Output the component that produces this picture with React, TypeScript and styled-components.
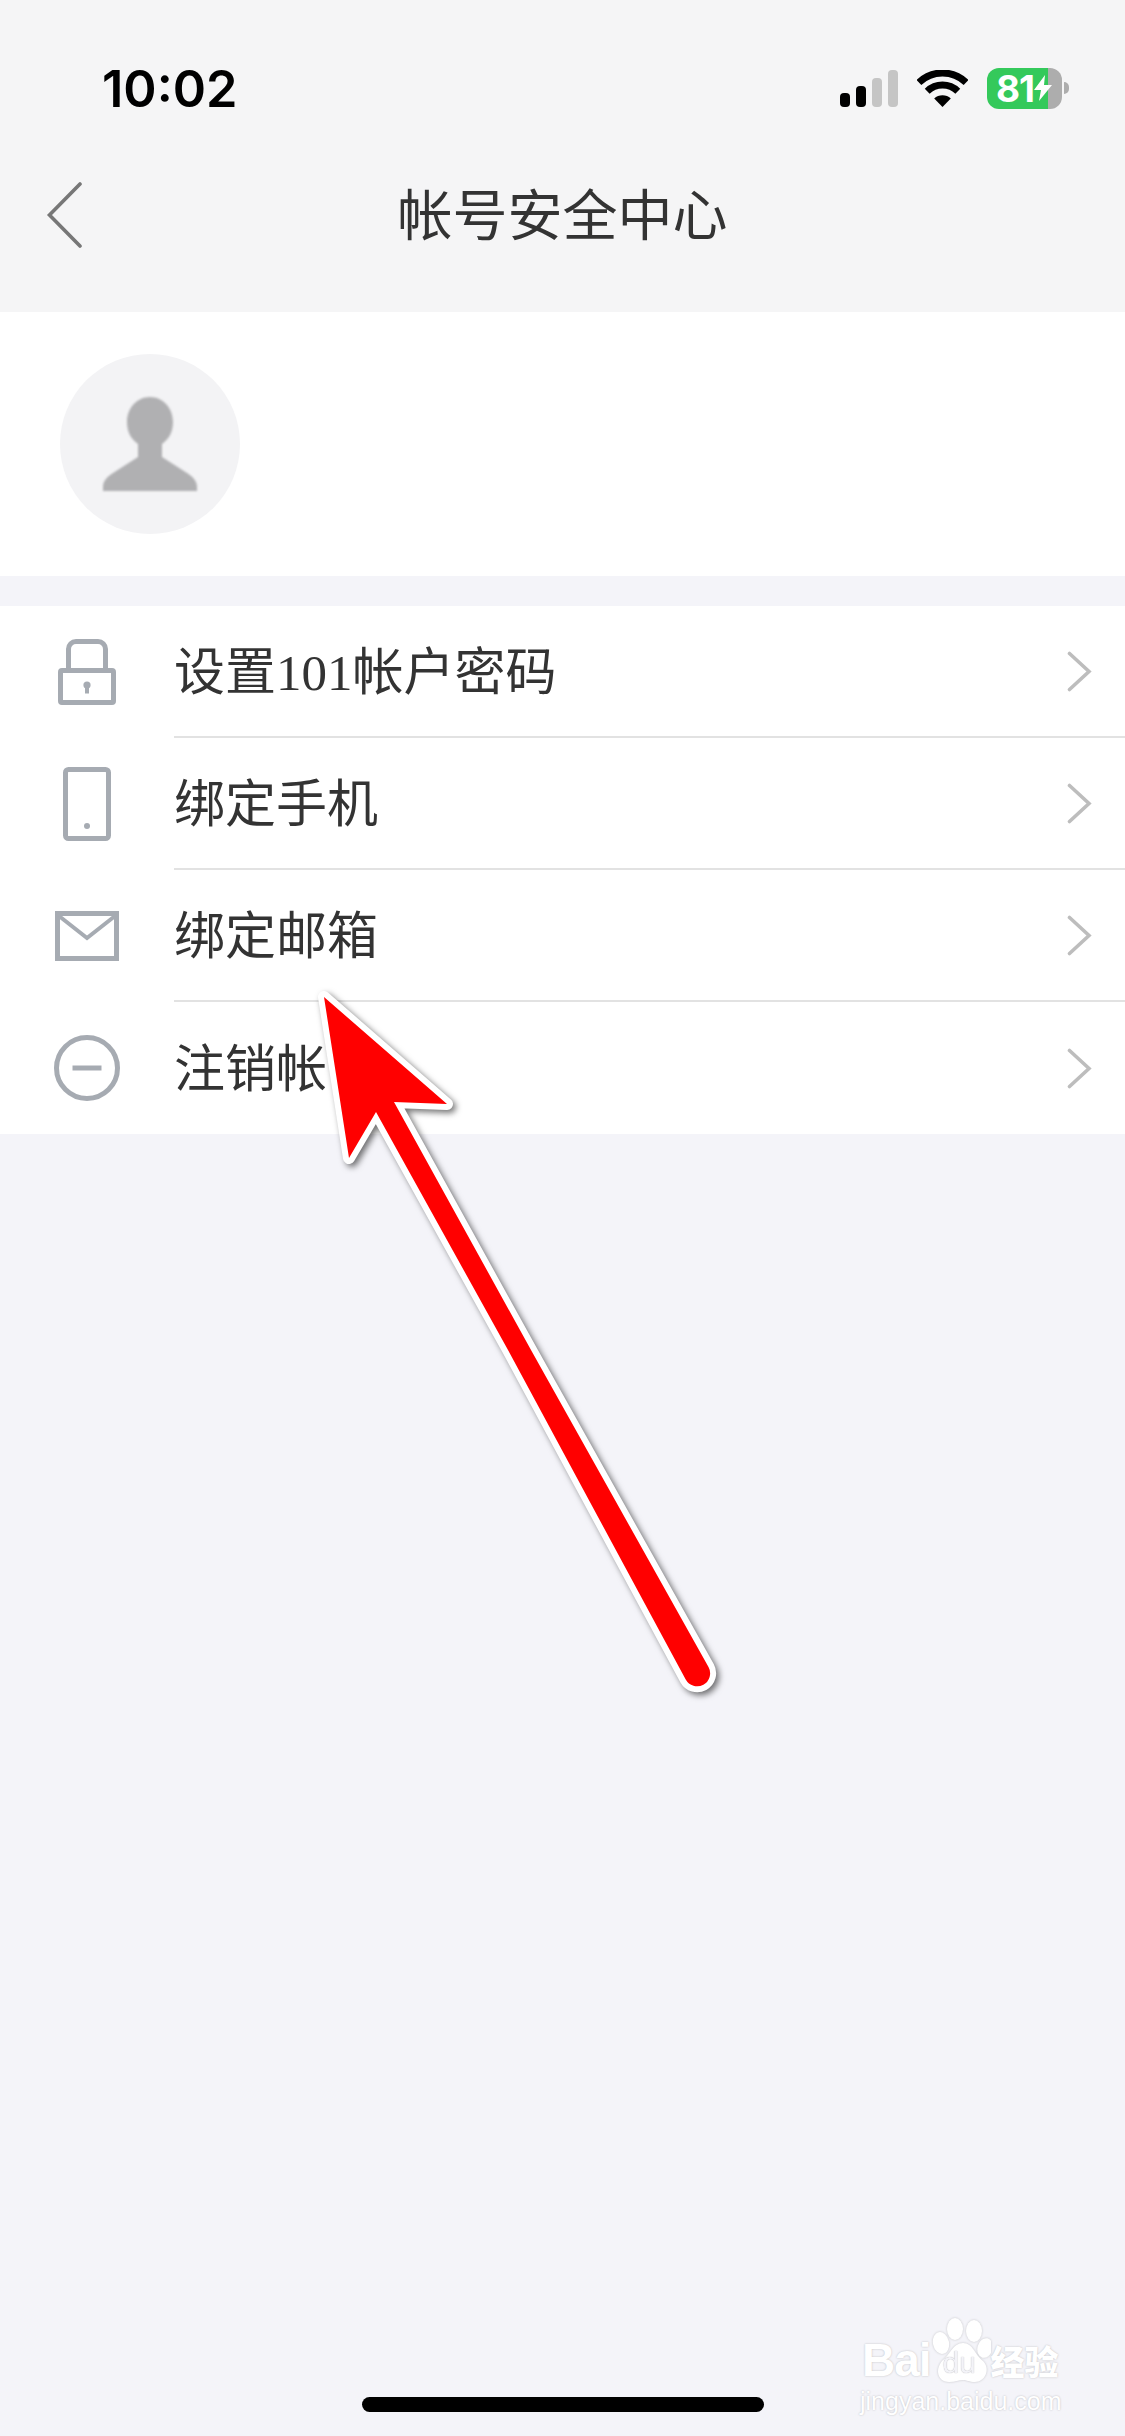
import React from "react";
import styled, { createGlobalStyle } from "styled-components";

const GlobalStyle = createGlobalStyle`
    html, body {
        margin: 0;
        padding: 0;
        background: #f4f4f9;
    }
`;

const Page = styled.div`
    position: relative;
    width: 1125px;
    height: 2436px;
    overflow: hidden;
    display: flex;
    flex-direction: column;
    background: #f4f4f9;
    font-family: "Liberation Serif", "Noto Sans CJK SC", serif;
`;

const Header = styled.header`
    height: 312px;
    background: #f5f5f6;
`;

const StatusBar = styled.div`
    height: 176px;
    display: flex;
    align-items: center;
    justify-content: space-between;
    padding: 0 56px 0 102px;
    box-sizing: border-box;
`;

const Time = styled.span`
    font-family: Inter, "Liberation Sans", sans-serif;
    font-size: 50.5px;
    font-weight: 600;
    color: #000;
`;

const StatusIcons = styled.div`
    display: flex;
    align-items: center;
`;

const Signal = styled.div`
    display: flex;
    align-items: flex-end;
    gap: 6px;
    height: 37px;
    margin-right: 19px;
`;

const SignalBar = styled.i<{ $h: number; $on: boolean }>`
    display: block;
    width: 10px;
    height: ${(p) => p.$h}px;
    border-radius: 4px;
    background: ${(p) => (p.$on ? "#000" : "#c5c5c5")};
`;

const Battery = styled.div`
    display: flex;
    align-items: center;
    width: 75px;
    height: 41px;
    margin-left: 19px;
    padding-left: 9px;
    box-sizing: border-box;
    border-radius: 12px;
    background: linear-gradient(90deg, #34c95b 81.5%, #adadad 81.5%);
    font-family: Inter, "Liberation Sans", sans-serif;
    font-size: 37px;
    font-weight: 700;
    letter-spacing: -1px;
    color: #fff;
`;

const BatteryNub = styled.i`
    display: block;
    width: 5px;
    height: 12px;
    margin-left: 2px;
    border-radius: 0 6px 6px 0;
    background: #adadad;
`;

const NavBar = styled.div`
    height: 76px;
    display: grid;
    grid-template-columns: 134px 1fr 134px;
    align-items: center;
`;

const BackButton = styled.svg`
    display: block;
    margin-left: 46px;
`;

const Title = styled.h1`
    margin: 0 0 7px;
    text-align: center;
    font-family: "Noto Sans CJK SC", sans-serif;
    font-size: 55px;
    line-height: 70px;
    font-weight: 400;
    color: #333;
`;

const Profile = styled.section`
    height: 264px;
    display: flex;
    align-items: center;
    padding-left: 60px;
    background: #fff;
`;

const Avatar = styled.div`
    width: 180px;
    height: 180px;
    border-radius: 50%;
    display: flex;
    align-items: center;
    justify-content: center;
    background: #f3f3f5;
`;

const AvatarFigure = styled.svg`
    filter: blur(0.8px);
`;

const List = styled.section`
    margin-top: 30px;
    background: #fff;
`;

const Row = styled.div`
    display: flex;
    height: 132px;
`;

const RowIcon = styled.div`
    width: 174px;
    display: flex;
    align-items: center;
    justify-content: center;
`;

const RowBody = styled.div<{ $last?: boolean }>`
    flex: 1;
    display: flex;
    align-items: center;
    justify-content: space-between;
    padding-right: 33px;
    border-bottom: ${(p) => (p.$last ? "none" : "2px solid #e2e2e2")};
`;

const RowLabel = styled.span`
    margin-bottom: 6px;
    font-size: 51px;
    font-weight: 400;
    color: #333;
`;

const Spacer = styled.div`
    flex: 1;
`;

const HomeIndicator = styled.div`
    align-self: center;
    width: 402px;
    height: 15px;
    margin-bottom: 24px;
    border-radius: 8px;
    background: #000;
`;

const ArrowOverlay = styled.svg`
    position: absolute;
    left: 0;
    top: 0;
    pointer-events: none;
    overflow: visible;
`;

const Watermark = styled.div`
    position: absolute;
    left: 860px;
    top: 2317px;
    width: 206px;
    color: #fff;
    font-family: "Liberation Sans", sans-serif;
    text-shadow: 0 0 2px #b9b9bd;
`;

const MarkLogo = styled.div`
    display: flex;
    align-items: flex-end;
`;

const MarkBai = styled.span`
    font-size: 46px;
    font-weight: 700;
    line-height: 46px;
    letter-spacing: -1px;
    margin-left: 2px;
`;

const MarkPaw = styled.div`
    position: relative;
    width: 60px;
    height: 66px;
    flex: none;
    filter: drop-shadow(0 0 1px #c4c4c8);
`;

const MarkDu = styled.span`
    position: absolute;
    left: 12px;
    bottom: 5px;
    font-size: 30px;
    line-height: 30px;
    color: #f3f3f8;
    text-shadow: 0 0 1px #9c9ca0;
`;

const MarkCn = styled.span`
    font-family: "Noto Sans CJK SC", sans-serif;
    font-size: 34px;
    font-weight: 900;
    line-height: 44px;
`;

const MarkDomain = styled.div`
    margin-top: 4px;
    font-size: 25px;
    line-height: 28px;
    white-space: nowrap;
`;

const ICON = "#a6abb2";

const LockIcon = () => (
    <svg width="58" height="66" viewBox="0 0 58 66" fill="none">
        <path d="M10.5 30V10a7.5 7.5 0 0 1 7.5-7.5h22a7.5 7.5 0 0 1 7.5 7.5v20" stroke={ICON} strokeWidth="5" />
        <rect x="2.5" y="31.5" width="53" height="32" rx="1.5" stroke={ICON} strokeWidth="5" />
        <circle cx="29" cy="46" r="3.6" fill={ICON} />
        <rect x="27" y="47" width="4" height="7.5" fill={ICON} />
    </svg>
);

const PhoneIcon = () => (
    <svg width="48" height="74" viewBox="0 0 48 74" fill="none">
        <rect x="2.5" y="2.5" width="43" height="69" rx="3" stroke={ICON} strokeWidth="5" />
        <circle cx="24" cy="59" r="3" fill={ICON} />
    </svg>
);

const MailIcon = () => (
    <svg width="64" height="50" viewBox="0 0 64 50" fill="none">
        <rect x="2.5" y="2.5" width="59" height="45" stroke={ICON} strokeWidth="5" />
        <path d="M4 5l28 22L60 5" stroke={ICON} strokeWidth="4" />
    </svg>
);

const CancelIcon = () => (
    <svg width="66" height="66" viewBox="0 0 66 66" fill="none">
        <circle cx="33" cy="33" r="30.5" stroke={ICON} strokeWidth="5" />
        <path d="M18.5 33h29" stroke={ICON} strokeWidth="5" />
    </svg>
);

const Chevron = () => (
    <svg width="25" height="41" viewBox="0 0 25 41" fill="none">
        <path d="M2.5 2.5L22 20.5 2.5 38.5" stroke="#bdbdbd" strokeWidth="3.6" strokeLinecap="round" strokeLinejoin="miter" />
    </svg>
);

const rows = [
    { icon: <LockIcon />, label: "设置101帐户密码" },
    { icon: <PhoneIcon />, label: "绑定手机" },
    { icon: <MailIcon />, label: "绑定邮箱" },
    { icon: <CancelIcon />, label: "注销帐号" },
];

const App = () => {
    return (
        <Page>
            <GlobalStyle />
            <Header>
                <StatusBar>
                    <Time>10:02</Time>
                    <StatusIcons>
                        <Signal>
                            <SignalBar $h={14} $on={true} />
                            <SignalBar $h={21} $on={true} />
                            <SignalBar $h={29} $on={false} />
                            <SignalBar $h={37} $on={false} />
                        </Signal>
                        <svg width="51" height="37" viewBox="0 0 51 37" fill="none">
                            <path d="M1.9 12.5A34 34 0 0 1 49.1 12.5" stroke="#000" strokeWidth="7" />
                            <path d="M10.2 21.2A22 22 0 0 1 40.8 21.2" stroke="#000" strokeWidth="7" />
                            <path d="M25.5 37L17.2 28.6A12 12 0 0 1 33.8 28.6Z" fill="#000" />
                        </svg>
                        <Battery>
                            81
                            <svg width="18" height="26" viewBox="0 0 18 26" style={{ flex: "none" }}>
                                <path d="M11 0L0 15h7L5 26l13-16h-8z" fill="#fff" />
                            </svg>
                        </Battery>
                        <BatteryNub />
                    </StatusIcons>
                </StatusBar>
                <NavBar>
                    <BackButton width="38" height="66" viewBox="0 0 38 66" fill="none">
                        <path d="M34 2L3.5 33 34 64" stroke="#777" strokeWidth="3.6" strokeLinecap="round" />
                    </BackButton>
                    <Title>帐号安全中心</Title>
                </NavBar>
            </Header>

            <Profile>
                <Avatar>
                    <AvatarFigure width="94" height="94" viewBox="0 0 94 94">
                        <path
                            d="M47 0C60 0 70 11 70 25C70 35 66 42 59 47L59 60L84 76C90 80 94 84 94 90L94 94L0 94L0 90C0 84 4 80 10 76L35 60L35 47C28 42 24 35 24 25C24 11 34 0 47 0Z"
                            fill="#b0b0b2"
                        />
                    </AvatarFigure>
                </Avatar>
            </Profile>

            <List>
                {rows.map((row, i) => (
                    <Row key={row.label}>
                        <RowIcon>{row.icon}</RowIcon>
                        <RowBody $last={i === rows.length - 1}>
                            <RowLabel>{row.label}</RowLabel>
                            <Chevron />
                        </RowBody>
                    </Row>
                ))}
            </List>

            <Spacer />
            <HomeIndicator />

            <ArrowOverlay width="1125" height="2436" viewBox="0 0 1125 2436">
                <path
                    d="M324 997L447 1104L394 1102L531 1350L708.5 1667A13 13 0 0 1 685.7 1679.6L508 1350L376 1112L349 1158Z"
                    fill="#f00"
                    stroke="#fff"
                    strokeWidth="12"
                    strokeLinejoin="round"
                    paintOrder="stroke"
                    style={{ filter: "drop-shadow(3px 3px 3px rgba(0,0,0,0.55))" }}
                />
            </ArrowOverlay>

            <Watermark>
                <MarkLogo>
                    <MarkBai>Bai</MarkBai>
                    <MarkPaw>
                        <svg width="60" height="66" viewBox="0 0 60 66" fill="#fff">
                            <ellipse cx="10" cy="26" rx="8" ry="11" transform="rotate(-12 10 26)" />
                            <ellipse cx="24" cy="12" rx="8" ry="11" />
                            <ellipse cx="43" cy="14" rx="8" ry="11" />
                            <ellipse cx="54" cy="31" rx="7.5" ry="10" transform="rotate(15 54 31)" />
                            <path d="M32 26C42 26 44 38 52 44C60 52 54 65 44 65C38 65 36 63 32 63C28 63 24 65 18 65C8 65 3 54 11 44C19 38 22 26 32 26Z" />
                        </svg>
                        <MarkDu>du</MarkDu>
                    </MarkPaw>
                    <MarkCn>经验</MarkCn>
                </MarkLogo>
                <MarkDomain>jingyan.baidu.com</MarkDomain>
            </Watermark>
        </Page>
    );
};

export default App;
